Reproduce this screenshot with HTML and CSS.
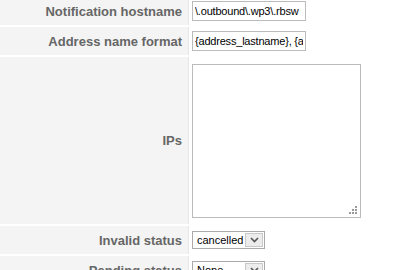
FILE: index.html
```html
<!DOCTYPE html>
<html>
<head>
	<meta charset="utf-8" />
	<title>Settings</title>
	<link rel="stylesheet" href="styles.css">
</head>
<body>
	<table class="form">
		<tr class="row first">
			<th class="label">Notification hostname</th>
			<td class="value"><input type="text" class="text" value="\.outbound\.wp3\.rbsw" /></td>
		</tr>
		<tr class="row">
			<th class="label">Address name format</th>
			<td class="value"><input type="text" class="text" value="{address_lastname}, {address_firstname}" /></td>
		</tr>
		<tr class="row tall">
			<th class="label">IPs</th>
			<td class="value"><textarea class="area"></textarea></td>
		</tr>
		<tr class="row">
			<th class="label">Invalid status</th>
			<td class="value">
				<span class="select"><span class="sel-text">cancelled</span><span class="sel-btn"><svg width="9" height="6" viewBox="0 0 9 6"><path d="M1 1 L4.5 4.5 L8 1" fill="none" stroke="#555" stroke-width="1.6"/></svg></span></span>
			</td>
		</tr>
		<tr class="row">
			<th class="label">Pending status</th>
			<td class="value">
				<span class="select"><span class="sel-text">None</span><span class="sel-btn"><svg width="9" height="6" viewBox="0 0 9 6"><path d="M1 1 L4.5 4.5 L8 1" fill="none" stroke="#555" stroke-width="1.6"/></svg></span></span>
			</td>
		</tr>
	</table>
</body>
</html>
```
FILE: styles.css
```css
body {
	margin: 0;
	background: #fff;
	font: 12px "Liberation Sans", Arial, sans-serif;
	overflow: hidden;
}

table.form {
	border-collapse: collapse;
	margin-top: -5px;
}

tr.row th,
tr.row td {
	border-top: 2px solid #fff;
	padding: 0;
}

th.label {
	width: 182px;
	padding-right: 6px !important;
	background: #f4f4f4;
	border-right: 1px solid #e6e6e6 !important;
	color: #666;
	font-weight: bold;
	font-size: 13px;
	text-align: right;
	height: 28px;
}

td.value {
	padding: 0 0 0 3px !important;
	height: 28px;
}

tr.tall th,
tr.tall td {
	height: 167px;
}

input.text {
	box-sizing: border-box;
	width: 114px;
	height: 20px;
	border: 1px solid #bbb;
	padding: 0 2px;
	font: 11px "Liberation Sans", Arial, sans-serif;
	letter-spacing: -0.2px;
	color: #000;
	display: block;
}

/* dotted grip drawn in the corner instead of the default one */
textarea.area {
	box-sizing: border-box;
	display: block;
	width: 169px;
	height: 154px;
	border: 1px solid #bbb;
	margin: 0;
	resize: none;
	background:
		linear-gradient(#999, #999) right 3px bottom 3px / 2px 2px no-repeat,
		linear-gradient(#999, #999) right 6px bottom 3px / 2px 2px no-repeat,
		linear-gradient(#999, #999) right 9px bottom 3px / 2px 2px no-repeat,
		linear-gradient(#999, #999) right 3px bottom 6px / 2px 2px no-repeat,
		linear-gradient(#999, #999) right 6px bottom 6px / 2px 2px no-repeat,
		linear-gradient(#999, #999) right 3px bottom 9px / 2px 2px no-repeat,
		#fff;
}

.select {
	display: inline-flex;
	align-items: stretch;
	border: 1px solid #aaa;
	height: 16px;
	vertical-align: middle;
}

.sel-text {
	box-sizing: border-box;
	font: 11px "Liberation Sans", Arial, sans-serif;
	padding: 0 0 0 4px;
	line-height: 16px;
	width: 52px;
	overflow: hidden;
	white-space: nowrap;
}

.sel-btn {
	width: 18px;
	margin: 1px 1px 1px 0;
	background: #ececec;
	border: 1px solid #c8c8c8;
	box-sizing: border-box;
	display: flex;
	align-items: center;
	justify-content: center;
}
```
